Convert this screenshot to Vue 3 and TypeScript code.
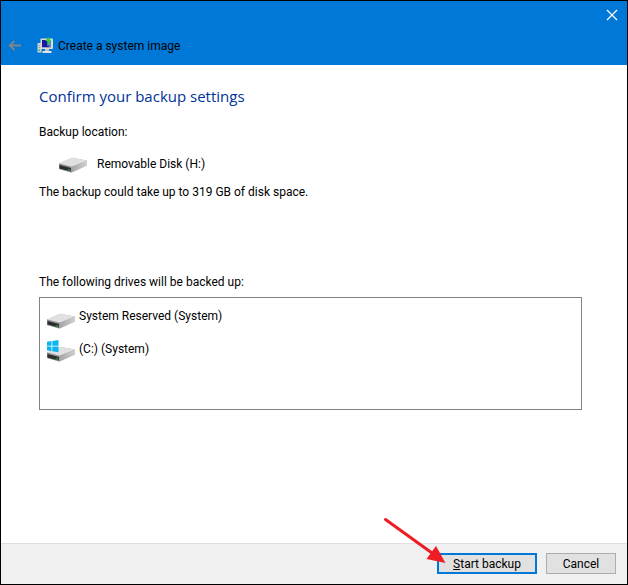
<script setup lang="ts">
interface Drive {
  name: string
  windows: boolean
}

const location = 'Removable Disk (H:)'
const requiredSpace = '319 GB'
const drives: Drive[] = [
  { name: 'System Reserved (System)', windows: false },
  { name: '(C:) (System)', windows: true },
]
</script>

<template>
  <main class="wizard">
    <svg class="defs" aria-hidden="true">
      <defs>
        <linearGradient id="drive-top" x1="0" y1="0" x2="1" y2="1">
          <stop offset="0" stop-color="#dedede" />
          <stop offset="1" stop-color="#e2e2e3" />
        </linearGradient>
        <linearGradient id="drive-side" x1="0" y1="0" x2="1" y2="0">
          <stop offset="0" stop-color="#a4a4a6" />
          <stop offset="1" stop-color="#d0d0d2" />
        </linearGradient>
        <symbol id="drive" viewBox="0 0 30 16">
          <path d="M1 6.500 L14 0.800 L29 3.600 L29 8.500 L13.500 15.500 L1 12 Z" fill="#b5b5b7" />
          <path d="M1 6.500 L14 0.800 L29 3.600 L13.500 9.800 Z" fill="url(#drive-top)" />
          <path d="M13.500 9.800 L29 3.600 L29 8.500 L13.500 15.500 Z" fill="url(#drive-side)" />
          <path d="M1 6.500 L13.500 9.800 L13.500 15.500 L1 12 Z" fill="#8d8f90" />
          <path d="M1.500 8 L12.800 11 L12.800 14.600 L1.500 11.500 Z" fill="#2b2d2c" />
          <path d="M9.800 12 L12.200 12.700 L12.200 13.900 L9.800 13.200 Z" fill="#27a43c" />
        </symbol>
      </defs>
    </svg>

    <header class="header">
      <div class="caption">
        <button class="icon-button" type="button" aria-label="Close">
          <svg width="12" height="12" viewBox="0 0 12 12">
            <path d="M1 1 L11 11 M11 1 L1 11" stroke="#fff" stroke-width="1.3" fill="none" />
          </svg>
        </button>
      </div>
      <div class="title-row">
        <button class="icon-button" type="button" aria-label="Back" disabled>
          <svg width="14" height="12" viewBox="0 0 14 12">
            <path d="M13 5.500 H2 M6.500 0.800 L1.800 5.500 L6.500 10.200" stroke="#858585" stroke-width="1.8" fill="none" />
          </svg>
        </button>
        <svg class="app-icon" width="17" height="17" viewBox="0 0 17 17" aria-hidden="true">
          <rect x="0.500" y="6" width="4" height="9.500" fill="#cfd3d6" />
          <path d="M1.500 8.500 H3.500 M1.500 10.500 H3.500" stroke="#9aa6ae" />
          <rect x="1.500" y="12.500" width="1.500" height="1.500" fill="#39b54a" />
          <rect x="3.500" y="1.500" width="12.500" height="10.500" rx="0.800" fill="#dedbd2" />
          <rect x="5" y="3" width="9" height="7.300" fill="#1719a8" />
          <path d="M9.500 3 H14 V10 H12 Z" fill="#5d83d8" />
          <rect x="8" y="12" width="4" height="2.500" fill="#c5c8ca" />
          <rect x="5.500" y="14" width="9" height="2" fill="#e2e3e3" />
          <path d="M8 4 L11.300 0.200 L14.500 4 L12.600 4 C12.600 6.500 12 8 10 9 C10.600 7 10.500 5.500 10.300 4 Z" fill="#37cf36" />
        </svg>
        <h1 class="title">Create a system image</h1>
      </div>
    </header>

    <section class="content">
      <h2 class="heading">Confirm your backup settings</h2>
      <p class="line location-label">Backup location:</p>
      <div class="location">
        <svg class="drive-icon" width="30" height="18" viewBox="0 0 30 18" aria-hidden="true">
          <use href="#drive" y="2" width="30" height="16" />
        </svg>
        <span>{{ location }}</span>
      </div>
      <p class="line space">The backup could take up to {{ requiredSpace }} of disk space.</p>
      <p id="drives-label" class="line">The following drives will be backed up:</p>
      <ul class="drives" aria-labelledby="drives-label">
        <li v-for="drive in drives" :key="drive.name" class="drive">
          <svg width="30" height="24" viewBox="0 0 30 24" aria-hidden="true">
            <use href="#drive" y="8" width="30" height="16" />
            <path
              v-if="drive.windows"
              d="M1 3.800 L5.500 3.100 V7.700 H1 Z M6.300 3 L12.500 2 V7.700 H6.300 Z M1 8.500 H5.500 V13.100 L1 12.400 Z M6.300 8.500 H12.500 V14.200 L6.300 13.200 Z"
              fill="#0bb5ee"
            />
          </svg>
          <span class="drive-name">{{ drive.name }}</span>
        </li>
      </ul>
    </section>

    <footer class="footer">
      <div class="start">
        <button class="button primary" type="button"><u>S</u>tart backup</button>
        <svg class="pointer" width="64" height="48" viewBox="0 0 64 48" aria-hidden="true">
          <path d="M3.500 2.500 L50 36" stroke="#ee1c25" stroke-width="3" stroke-linecap="round" />
          <path d="M63.500 46 L44.500 42 L54 29 Z" fill="#ee1c25" />
        </svg>
      </div>
      <button class="button" type="button">Cancel</button>
    </footer>
  </main>
</template>

<style>
body {
  margin: 0;
}
</style>

<style scoped>
.wizard {
  box-sizing: border-box;
  display: flex;
  flex-direction: column;
  min-height: 100vh;
  border: 1px solid #000;
  background: #fff;
  color: #000;
  font: 12px/16px Roboto, "Open Sans", sans-serif;
}

.defs {
  position: absolute;
  width: 0;
  height: 0;
}

.header {
  background: #0078d7;
  height: 64px;
}

.caption {
  display: flex;
  justify-content: flex-end;
  padding: 8px 9px 0 0;
}

.icon-button {
  display: flex;
  padding: 0;
  border: 0;
  background: none;
}

.title-row {
  display: flex;
  align-items: center;
  padding: 16px 8px 0 7px;
}

.app-icon {
  margin-left: 15px;
}

.title {
  margin: 0 0 0 4px;
  font-size: 12px;
  font-weight: 400;
}

.content {
  flex: 1;
  padding: 20px 45px 24px 38px;
}

.heading {
  margin: 0;
  color: #003399;
  font-family: "Open Sans", sans-serif;
  font-size: 15px;
  line-height: 22px;
  font-weight: 400;
}

.line {
  margin: 0;
}

.location-label {
  margin-top: 17px;
}

.location {
  display: flex;
  align-items: center;
  gap: 9px;
  margin: 15px 0 11px 19px;
}

.space {
  margin-bottom: 74px;
}

.drives {
  box-sizing: border-box;
  min-height: 113px;
  margin: 7px 0 0;
  padding: 7px 6px;
  border: 1px solid #828282;
  list-style: none;
}

.drive {
  display: flex;
  height: 33px;
  gap: 3px;
}

.drive-name {
  padding-top: 3px;
}

.footer {
  display: flex;
  justify-content: flex-end;
  gap: 9px;
  padding: 9px 11px 10px;
  border-top: 1px solid #dfdfdf;
  background: #f0f0f0;
}

.start {
  position: relative;
}

.button {
  box-sizing: border-box;
  width: 70px;
  height: 21px;
  padding: 0;
  border: 1px solid #adadad;
  background: #e1e1e1;
  color: #000;
  font: inherit;
}

.primary {
  width: 100px;
  border: 2px solid #0078d7;
}

.pointer {
  position: absolute;
  right: 91px;
  bottom: 9px;
  pointer-events: none;
}
</style>
